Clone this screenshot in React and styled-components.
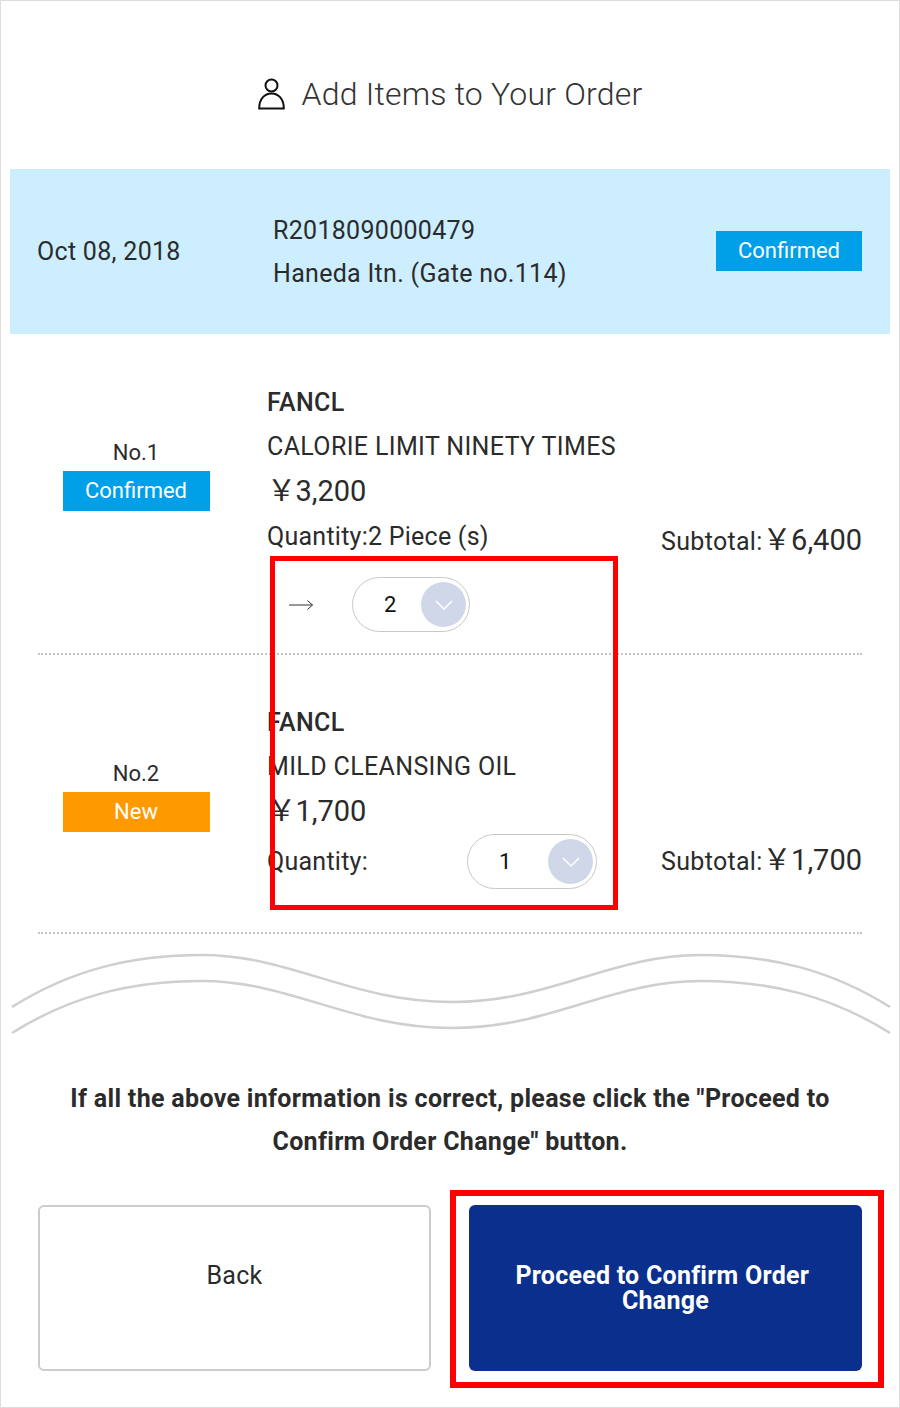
import React from "react";
import styled, { createGlobalStyle } from "styled-components";

const GlobalStyle = createGlobalStyle`
  html,
  body {
    margin: 0;
    padding: 0;
    background: #fff;
  }

  body {
    font-family: Roboto, "Noto Sans CJK JP", sans-serif;
    color: #2b2b2b;
  }
`;

const Frame = styled.div`
  position: relative;
  box-sizing: border-box;
  width: 900px;
  height: 1408px;
  border: 1px solid #ddd;
  overflow: hidden;
  letter-spacing: 0.3px;
`;

const Heading = styled.h1`
  display: flex;
  align-items: center;
  justify-content: center;
  gap: 17px;
  height: 168px;
  margin: 0;
  padding-top: 18px;
  box-sizing: border-box;
  font-size: 32px;
  font-weight: 300;
  letter-spacing: 0.2px;
  color: #333;
`;

const OrderBar = styled.div`
  display: flex;
  align-items: center;
  height: 165px;
  margin: 0 9px;
  padding: 0 28px 0 27px;
  background: #cceeff;
  font-size: 25px;
`;

const OrderDate = styled.div`
  width: 236px;
`;

const OrderInfo = styled.div`
  flex: 1;
  line-height: 43px;
`;

const Badge = styled.div`
  width: 147px;
  height: 40px;
  line-height: 40px;
  text-align: center;
  font-size: 22px;
  letter-spacing: 0;
  color: #fff;
  background: ${(p) => p.$bg};
`;

const BarBadge = styled(Badge)`
  width: 146px;
  margin-top: -1px;
`;

const Item = styled.div`
  display: flex;
  margin: 0 37px;
  padding: ${(p) => p.$top}px 0 ${(p) => p.$bottom}px;
  border-bottom: 2px dotted #c4c4c4;
`;

const ItemSide = styled.div`
  display: flex;
  flex-direction: column;
  align-items: center;
  gap: 5px;
  width: 229px;
  padding: ${(p) => p.$top}px 33px 0 0;
  box-sizing: border-box;
  font-size: 22px;
  line-height: 26px;
  letter-spacing: 0;
`;

const ItemMain = styled.div`
  flex: 1;
  font-size: 25px;
  line-height: 44px;
  letter-spacing: 0.36px;
`;

const Brand = styled.div`
  font-weight: 500;
`;

const Price = styled.div`
  height: 44px;
  font-size: 29px;
  letter-spacing: 0;
`;

const Yen = styled.span`
  font-family: "Noto Sans CJK JP", sans-serif;
  font-size: 29px;
  font-weight: 400;
  letter-spacing: -0.5px;
  line-height: 1;
`;

const QuantityRow = styled.div`
  display: flex;
  align-items: center;
  height: ${(p) => p.$height}px;
  margin-top: ${(p) => p.$gap}px;
`;

const QuantityLabel = styled.div`
  width: ${(p) => p.$width}px;
  letter-spacing: 0.25px;
`;

const Subtotal = styled.div`
  margin-left: auto;
  position: relative;
  top: ${(p) => p.$shift}px;
  font-size: 25px;
  line-height: 44px;
  letter-spacing: 0.3px;
  white-space: nowrap;

  b {
    font-size: 29px;
    font-weight: 400;
    letter-spacing: 0;
  }
`;

const ChangeRow = styled.div`
  display: flex;
  align-items: center;
  gap: 39px;
  padding: 18px 0 0 22px;
`;

const Select = styled.div`
  display: flex;
  align-items: center;
  justify-content: space-between;
  box-sizing: border-box;
  width: ${(p) => p.$width}px;
  height: 55px;
  padding: 0 3px 0 31px;
  border: 1.5px solid #c8c8c8;
  border-radius: 28px;
  font-size: 22px;
  color: #111;
`;

const SelectArrow = styled.span`
  display: flex;
  align-items: center;
  justify-content: center;
  width: 45px;
  height: 45px;
  border-radius: 50%;
  background: #cfd7e9;
`;

const Wave = styled.svg`
  display: block;
  width: 898px;
  height: 139px;
`;

const Footer = styled.div`
  margin: 0 -1px;
  padding: 4px 0 17px;
  background: #fff;
`;

const Notice = styled.p`
  margin: 0 0 42px;
  padding: 0 40px;
  text-align: center;
  font-size: 25px;
  font-weight: 700;
  letter-spacing: 0.32px;
  line-height: 43px;
`;

const Buttons = styled.div`
  display: grid;
  grid-template-columns: 393px 393px;
  gap: 38px;
  padding: 0 38px;
`;

const Button = styled.button`
  height: 166px;
  padding: ${(p) => (p.$primary ? "0 30px" : "0 30px 26px")};
  border: ${(p) => (p.$primary ? "none" : "2px solid #ccc")};
  border-radius: 6px;
  background: ${(p) => (p.$primary ? "#0a2f8c" : "#fff")};
  color: ${(p) => (p.$primary ? "#fff" : "#2b2b2b")};
  font-family: Roboto, sans-serif;
  font-size: 25px;
  font-weight: ${(p) => (p.$primary ? 700 : 400)};
  letter-spacing: 0.25px;
  line-height: 25px;
`;

const Highlight = styled.div`
  position: absolute;
  box-sizing: border-box;
  left: ${(p) => p.$left}px;
  top: ${(p) => p.$top}px;
  width: ${(p) => p.$width}px;
  height: ${(p) => p.$height}px;
  border: ${(p) => p.$border}px solid #f00;
  pointer-events: none;
`;

const PersonIcon = () => (
  <svg width="27" height="32" viewBox="0 0 27 32" fill="none" stroke="#111" strokeWidth="2">
    <circle cx="13.5" cy="7.5" r="6" />
    <path d="M1.2 30.5 C1.2 21 6.5 15.5 13.5 15.5 C20.5 15.5 25.8 21 25.8 30.5 Z" />
  </svg>
);

const ArrowIcon = () => (
  <svg width="24" height="12" viewBox="0 0 24 12" fill="none" stroke="#333" strokeWidth="1">
    <path d="M0 6 H23.5 M18.5 1.5 L23.5 6 L18.5 10.5" />
  </svg>
);

const Chevron = () => (
  <svg width="18" height="10" viewBox="0 0 18 10" fill="none" stroke="#fff" strokeWidth="1.5">
    <path d="M1 1 L9 9 L17 1" />
  </svg>
);

const wavePath = "C70 20 130 5 201 5 C290 5 350 52 451 52 C550 52 610 5 699 5 C770 5 830 20 889 57";

export default function App() {
  return (
    <Frame>
      <GlobalStyle />
      <Heading>
        <PersonIcon />
        Add Items to Your Order
      </Heading>

      <OrderBar>
        <OrderDate>Oct 08, 2018</OrderDate>
        <OrderInfo>
          R2018090000479
          <br />
          Haneda Itn. (Gate no.114)
        </OrderInfo>
        <BarBadge $bg="#00a0e9">Confirmed</BarBadge>
      </OrderBar>

      <Item $top={47} $bottom={21}>
        <ItemSide $top={59}>
          No.1
          <Badge $bg="#00a0e9">Confirmed</Badge>
        </ItemSide>
        <ItemMain>
          <Brand>FANCL</Brand>
          <div>CALORIE LIMIT NINETY TIMES</div>
          <Price>
            <Yen>￥</Yen>3,200
          </Price>
          <QuantityRow $height={44} $gap={2}>
            <QuantityLabel>Quantity:2 Piece (s)</QuantityLabel>
            <Subtotal $shift={4}>
              Subtotal:<Yen>￥</Yen>
              <b>6,400</b>
            </Subtotal>
          </QuantityRow>
          <ChangeRow>
            <ArrowIcon />
            <Select $width={118}>
              2
              <SelectArrow>
                <Chevron />
              </SelectArrow>
            </Select>
          </ChangeRow>
        </ItemMain>
      </Item>

      <Item $top={46} $bottom={43}>
        <ItemSide $top={60}>
          No.2
          <Badge $bg="#ff9900">New</Badge>
        </ItemSide>
        <ItemMain>
          <Brand>FANCL</Brand>
          <div>MILD CLEANSING OIL</div>
          <Price>
            <Yen>￥</Yen>1,700
          </Price>
          <QuantityRow $height={55} $gap={1}>
            <QuantityLabel $width={200}>Quantity:</QuantityLabel>
            <Select $width={130}>
              1
              <SelectArrow>
                <Chevron />
              </SelectArrow>
            </Select>
            <Subtotal $shift={-1}>
              Subtotal:<Yen>￥</Yen>
              <b>1,700</b>
            </Subtotal>
          </QuantityRow>
        </ItemMain>
      </Item>

      <Wave viewBox="0 0 898 139" fill="none" stroke="#cfcfcf" strokeWidth="2.5">
        <path d={`M11 57 ${wavePath}`} transform="translate(0 16)" />
        <path d={`M11 57 ${wavePath}`} transform="translate(0 42)" />
      </Wave>

      <Footer>
        <Notice>
          If all the above information is correct, please click the "Proceed to Confirm Order Change" button.
        </Notice>
        <Buttons>
          <Button>Back</Button>
          <Button $primary>Proceed to Confirm Order{"\u00a0 "}Change</Button>
        </Buttons>
      </Footer>

      <Highlight $left={269} $top={555} $width={348} $height={354} $border={5} />
      <Highlight $left={449} $top={1189} $width={434} $height={198} $border={6} />
    </Frame>
  );
}
